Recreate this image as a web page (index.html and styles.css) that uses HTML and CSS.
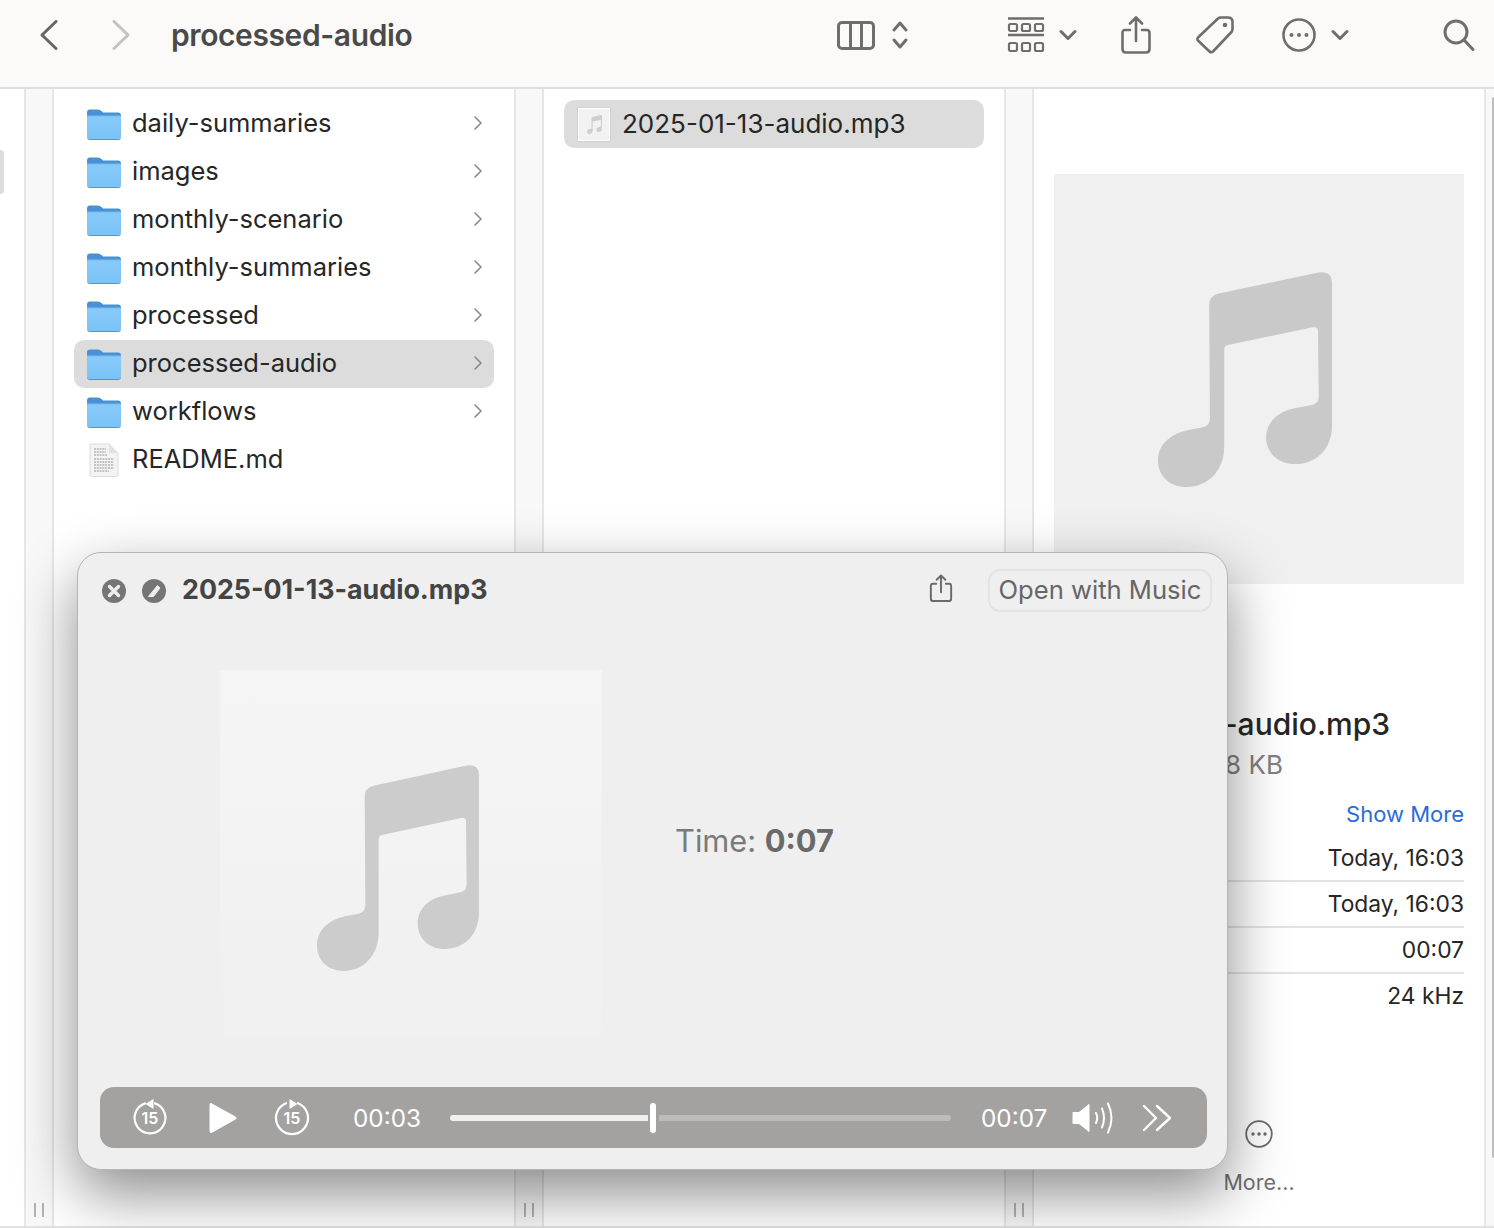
FILE: index.html
```html
<!DOCTYPE html>
<html lang="en">
<head>
<meta charset="utf-8">
<title>processed-audio</title>
<link rel="stylesheet" href="styles.css">
</head>
<body>
<svg class="sprite" width="0" height="0" aria-hidden="true">
  <defs>
    <linearGradient id="folderBody" x1="0" y1="0" x2="0" y2="1"><stop offset="0" stop-color="#86cbfa"/><stop offset="1" stop-color="#7cc2f5"/></linearGradient>
    <symbol id="folder" viewBox="0 0 34 31">
      <path d="M0 3.5Q0 .5 3 .5H11Q13 .5 14.5 2L16 3.500H31Q34 3.500 34 6.500V10H0Z" fill="#4a90d6"/>
      <path d="M0 6.500H34V27Q34 30 31 30H3Q0 30 0 27Z" fill="url(#folderBody)"/>
      <path d="M0 6.200H34V7.200H0Z" fill="#5fa6e4"/>
      <path d="M0 27Q0 30 3 30H31Q34 30 34 27V28Q34 31 31 31H3Q0 31 0 28Z" fill="#5a90c4"/>
    </symbol>
    <symbol id="note" viewBox="320 314 486 618" preserveAspectRatio="none">
      <path d="M463 410Q463 382 490 376L765 316Q806 308 806 345V755C806 825 760 866 703 866C655 866 622 833 622 790C622 745 655 715 705 705L750 696Q769 692 769 672L767 485Q767 470 752 473L515 524Q505 526 505 537V815C505 890 455 932 400 932C352 932 320 900 320 855C320 805 360 778 405 768L445 760Q465 756 465 735Z"/>
    </symbol>
    <symbol id="chev" viewBox="0 0 10 16"><path d="M2 2L8 8L2 14" fill="none" stroke="#8a8a8a" stroke-width="1.600" stroke-linecap="round" stroke-linejoin="round"/></symbol>
    <symbol id="down" viewBox="0 0 18 12"><path d="M2 2.500L9 9.500L16 2.500" fill="none" stroke="#6e6e6e" stroke-width="3" stroke-linecap="round" stroke-linejoin="round"/></symbol>
    <symbol id="grip" viewBox="0 0 12 16"><path d="M2 1V15M10 1V15" stroke="#9c9c9c" stroke-width="1.500"/></symbol>
  </defs>
</svg>

<div class="window">
  <header class="toolbar">
    <svg class="tb-back" width="18" height="30" viewBox="0 0 18 30"><path d="M16 1.500L2 15L16 28.500" fill="none" stroke="#666" stroke-width="3" stroke-linecap="round" stroke-linejoin="round"/></svg>
    <svg class="tb-forward" width="18" height="30" viewBox="0 0 18 30"><path d="M2 1.500L16 15L2 28.500" fill="none" stroke="#c2c2c2" stroke-width="3" stroke-linecap="round" stroke-linejoin="round"/></svg>
    <h1 class="tb-title">processed-audio</h1>
    <svg class="tb-columns" width="38" height="29" viewBox="0 0 38 29"><g fill="none" stroke="#6e6e6e" stroke-width="3"><rect x="1.500" y="1.500" width="35" height="26" rx="3.500"/><path d="M13.500 2V27M24.500 2V27"/></g></svg>
    <svg class="tb-updown" width="18" height="30" viewBox="0 0 18 30"><path d="M3 10L9 3L15 10M3 20L9 27L15 20" fill="none" stroke="#6e6e6e" stroke-width="3" stroke-linecap="round" stroke-linejoin="round"/></svg>
    <svg class="tb-group" width="38" height="36" viewBox="0 0 38 36"><g fill="none" stroke="#6e6e6e"><path d="M1 1.500H37M1 18H37" stroke-width="2.600"/><g stroke-width="2.200"><rect x="2" y="7" width="8" height="7" rx="1.500"/><rect x="15" y="7" width="8" height="7" rx="1.500"/><rect x="28" y="7" width="8" height="7" rx="1.500"/><rect x="2" y="26" width="8" height="8" rx="1.500"/><rect x="15" y="26" width="8" height="8" rx="1.500"/><rect x="28" y="26" width="8" height="8" rx="1.500"/></g></g></svg>
    <svg class="tb-down1" width="18" height="12"><use href="#down"/></svg>
    <svg class="tb-share" width="30" height="38" viewBox="0 0 30 38"><g fill="none" stroke="#6e6e6e" stroke-width="2.600" stroke-linecap="round" stroke-linejoin="round"><path d="M9 14H4Q1.500 14 1.500 17V33Q1.500 36.500 5 36.500H25Q28.500 36.500 28.500 33V17Q28.500 14 26 14H21"/><path d="M15 25V2M9 7.500L15 1.500L21 7.500"/></g></svg>
    <svg class="tb-tag" width="38" height="38" viewBox="0 0 38 38"><path d="M22 2.500Q23 1.500 25 1.500H32Q36.500 1.500 36.500 6V13Q36.500 15 35.500 16L17 35.500Q15 37 13.500 35.500L2 24.500Q.8 23 2 21.500Z" fill="none" stroke="#6e6e6e" stroke-width="2.600" stroke-linejoin="round"/><circle cx="29" cy="9" r="2.300" fill="#6e6e6e"/></svg>
    <svg class="tb-more" width="34" height="34" viewBox="0 0 34 34"><circle cx="17" cy="17" r="15.500" fill="none" stroke="#6e6e6e" stroke-width="2.600"/><g fill="#6e6e6e"><circle cx="9.500" cy="17" r="2"/><circle cx="17" cy="17" r="2"/><circle cx="24.500" cy="17" r="2"/></g></svg>
    <svg class="tb-down2" width="18" height="12"><use href="#down"/></svg>
    <svg class="tb-search" width="32" height="32" viewBox="0 0 32 32"><g fill="none" stroke="#6e6e6e" stroke-width="3" stroke-linecap="round"><circle cx="13" cy="13" r="11"/><path d="M21 21L30 30.500"/></g></svg>
  </header>

  <main class="browser">
    <div class="column col-stub"><div class="stub-selected"></div></div>
    <div class="strip"><svg class="grip" width="12" height="16"><use href="#grip"/></svg></div>

    <section class="column col-list">
      <div class="row"><svg class="icon-folder" width="34" height="31"><use href="#folder"/></svg><span class="row-name">daily-summaries</span><svg class="row-chev" width="10" height="16"><use href="#chev"/></svg></div>
      <div class="row"><svg class="icon-folder" width="34" height="31"><use href="#folder"/></svg><span class="row-name">images</span><svg class="row-chev" width="10" height="16"><use href="#chev"/></svg></div>
      <div class="row"><svg class="icon-folder" width="34" height="31"><use href="#folder"/></svg><span class="row-name">monthly-scenario</span><svg class="row-chev" width="10" height="16"><use href="#chev"/></svg></div>
      <div class="row"><svg class="icon-folder" width="34" height="31"><use href="#folder"/></svg><span class="row-name">monthly-summaries</span><svg class="row-chev" width="10" height="16"><use href="#chev"/></svg></div>
      <div class="row"><svg class="icon-folder" width="34" height="31"><use href="#folder"/></svg><span class="row-name">processed</span><svg class="row-chev" width="10" height="16"><use href="#chev"/></svg></div>
      <div class="row is-selected"><svg class="icon-folder" width="34" height="31"><use href="#folder"/></svg><span class="row-name">processed-audio</span><svg class="row-chev" width="10" height="16"><use href="#chev"/></svg></div>
      <div class="row"><svg class="icon-folder" width="34" height="31"><use href="#folder"/></svg><span class="row-name">workflows</span><svg class="row-chev" width="10" height="16"><use href="#chev"/></svg></div>
      <div class="row">
        <svg class="icon-folder" width="34" height="36" viewBox="0 0 34 36">
          <path d="M3 2H22L31 11V33Q31 34.500 29.500 34.500H4.500Q3 34.500 3 33Z" fill="#f3f3f3" stroke="#dcdcdc"/>
          <path d="M22 2V11H31Z" fill="#e2e2e2"/>
          <path d="M7 7H19M7 10H19M7 13H20M7 17H27M7 20H27M7 23H27M7 26H27M7 29H22" stroke="#b4b4b4" stroke-width="1.500" stroke-dasharray="2 .8"/>
        </svg>
        <span class="row-name">README.md</span>
      </div>
    </section>
    <div class="strip"><svg class="grip" width="12" height="16"><use href="#grip"/></svg></div>

    <section class="column col-list">
      <div class="row is-selected row-file">
        <div class="thumb"><svg class="thumb-note" width="15" height="19"><use href="#note"/></svg></div>
        <span class="row-name">2025-01-13-audio.mp3</span>
      </div>
    </section>
    <div class="strip"><svg class="grip" width="12" height="16"><use href="#grip"/></svg></div>

    <aside class="column col-preview">
      <div class="preview-art"><svg class="preview-note" width="174" height="215"><use href="#note"/></svg></div>
      <h2 class="preview-name">2025-01-13-audio.mp3</h2>
      <p class="preview-size">8 KB</p>
      <a class="show-more">Show More</a>
      <dl class="meta">
        <dd class="meta-row">Today, 16:03</dd>
        <dd class="meta-row">Today, 16:03</dd>
        <dd class="meta-row">00:07</dd>
        <dd class="meta-row">24 kHz</dd>
      </dl>
      <div class="more-action">
        <svg width="28" height="28" viewBox="0 0 28 28"><circle cx="14" cy="14" r="12.800" fill="none" stroke="#6a6a6a" stroke-width="1.800"/><g fill="#6a6a6a"><circle cx="8" cy="14" r="1.700"/><circle cx="14" cy="14" r="1.700"/><circle cx="20" cy="14" r="1.700"/></g></svg>
        <span>More...</span>
      </div>
    </aside>
    <div class="edge"><div class="edge-thumb"></div></div>
  </main>
</div>

<div class="quicklook">
  <div class="ql-head">
    <svg width="24" height="24" viewBox="0 0 24 24"><circle cx="12" cy="12" r="12" fill="#757575"/><path d="M7.500 7.500L16.500 16.500M16.500 7.500L7.500 16.500" stroke="#eee" stroke-width="3.400" stroke-linecap="round"/></svg>
    <svg class="ql-pin" width="24" height="24" viewBox="0 0 24 24"><circle cx="12" cy="12" r="12" fill="#757575"/><path d="M6.500 17.500H11.500L18 9L15.500 6.500Z" fill="#eee" stroke="#eee" stroke-width="1" stroke-linejoin="round"/></svg>
    <h3 class="ql-title">2025-01-13-audio.mp3</h3>
    <svg class="ql-share" width="24" height="29" viewBox="0 0 24 30"><g fill="none" stroke="#6a6a6a" stroke-width="2" stroke-linecap="round" stroke-linejoin="round"><path d="M7 10H3.500Q1.500 10 1.500 12.500V25.500Q1.500 28 4 28H20Q22.500 28 22.500 25.500V12.500Q22.500 10 20.500 10H17"/><path d="M12 19V2M7.500 6L12 1.500L16.500 6"/></g></svg>
    <button class="ql-open">Open with Music</button>
  </div>
  <div class="ql-body">
    <div class="ql-art"><svg class="ql-note" width="162" height="206"><use href="#note"/></svg></div>
    <p class="ql-time">Time: <b>0:07</b></p>
  </div>
  <div class="ql-controls">
    <svg class="ctl-back" width="34" height="38" viewBox="0 0 34 38"><path d="M12 4.400A15.400 15.400 0 1 0 22 4.400" fill="none" stroke="#fff" stroke-width="2.200" stroke-linecap="round"/><path d="M20.500 0V10L12.500 5Z" fill="#fff"/><text class="ctl-15" x="17" y="24.800">15</text></svg>
    <svg class="ctl-play" width="28" height="32" viewBox="0 0 28 32"><path d="M2 1.500Q1 1 1 3V29Q1 31 2.500 30.500L26.500 17Q28 16 26.500 15Z" fill="#fff" stroke="#fff" stroke-linejoin="round"/></svg>
    <svg class="ctl-fwd" width="36" height="38" viewBox="0 0 36 38"><path d="M24 4.200A16 16 0 1 1 12 4.200" fill="none" stroke="#fff" stroke-width="2.200" stroke-linecap="round"/><path d="M15.500 0V10L23.500 5Z" fill="#fff"/><text class="ctl-15" x="18" y="24.800">15</text></svg>
    <span class="ctl-time ctl-elapsed">00:03</span>
    <div class="slider">
      <div class="slider-fill"></div>
      <div class="slider-thumb"></div>
      <div class="slider-rest"></div>
    </div>
    <span class="ctl-time ctl-total">00:07</span>
    <svg class="ctl-vol" width="42" height="32" viewBox="0 0 42 32"><path d="M1 10.500H7L17 2.500V29.500L7 21.500H1Z" fill="#fff" stroke="#fff" stroke-linejoin="round"/><g fill="none" stroke="#fff" stroke-width="2" stroke-linecap="round"><path d="M24 11Q26.500 16 24 21"/><path d="M30 6.500Q34 16 30 25.500"/><path d="M36 1.500Q43 16 36 30.500"/></g></svg>
    <svg class="ctl-ff" width="30" height="28" viewBox="0 0 30 28"><path d="M2 2L14 14L2 26M15 2L28 14L15 26" fill="none" stroke="#fff" stroke-width="2.400" stroke-linecap="round" stroke-linejoin="round"/></svg>
  </div>
</div>
</body>
</html>
```
FILE: styles.css
```css
* { box-sizing: border-box; }
html, body { margin: 0; padding: 0; height: 100%; }
body {
  position: relative;
  width: 1494px;
  height: 1228px;
  overflow: hidden;
  background: #fff;
  font-family: Inter, "Liberation Sans", sans-serif;
  color: #262626;
}
.sprite { position: absolute; }
svg { display: block; flex: none; }

.window { display: flex; flex-direction: column; height: 100%; border-bottom: 2px solid #e2e2e2; }

.toolbar {
  display: flex;
  align-items: center;
  height: 89px;
  flex: none;
  padding: 0 0 17px 0;
  background: #fbfaf9;
  border-bottom: 2px solid #dedede;
}
.tb-back { margin-left: 40px; }
.tb-forward { margin-left: 54px; }
.tb-title { margin: 0 0 0 41px; font-size: 30px; font-weight: 600; color: #4a4a4a; letter-spacing: -0.4px; }
.tb-columns { margin-left: auto; }
.tb-updown { margin-left: 16px; }
.tb-group { margin-left: 98px; }
.tb-down1 { margin-left: 14px; }
.tb-share { margin-left: 44px; }
.tb-tag { margin-left: 45px; }
.tb-more { margin-left: 48px; }
.tb-down2 { margin-left: 15px; }
.tb-search { margin-left: 94px; margin-right: 19px; }

.browser { display: flex; flex: 1; min-height: 0; }
.column { height: 100%; }
.col-stub { width: 24px; padding-top: 61px; }
.stub-selected { width: 4px; height: 44px; background: #dcdcdc; border-radius: 0 8px 8px 0; }
.strip {
  display: flex;
  align-items: flex-end;
  justify-content: center;
  width: 30px;
  padding-bottom: 8px;
  background: #f8f8f8;
  border-left: 2px solid #e6e6e6;
  border-right: 2px solid #e6e6e6;
}
.col-list { width: 460px; padding: 11px 20px 0; }

.row { display: flex; align-items: center; height: 48px; padding-left: 13px; padding-right: 11px; border-radius: 10px; }
.row.is-selected { background: #dcdcdc; }
.row-name { margin-left: 11px; padding-bottom: 3px; font-size: 25.5px; color: #262626; }
.row-chev { margin-left: auto; margin-bottom: 2px; }

.row-file { padding-left: 14px; }
.row-file .row-name { margin-left: 12px; padding-bottom: 1px; font-size: 26px; }
.thumb { display: flex; align-items: center; justify-content: center; width: 32px; height: 33px; background: #f2f2f2; border: 1px solid #fff; box-shadow: 0 0 1px #999; }
.thumb-note { fill: #cfcfcf; }

.col-preview { display: flex; flex-direction: column; width: 450px; padding: 85px 20px 0; }
.preview-art { display: flex; align-items: center; justify-content: center; height: 410px; flex: none; background: #f0f0f0; }
.preview-note { fill: #c9c9c9; margin-left: -28px; }
.preview-name { margin: 122px 0 0; font-size: 30px; font-weight: 500; line-height: 36px; color: #262626; text-align: right; padding-right: 74px; white-space: nowrap; }
.preview-size { margin: 6px 0 0; font-size: 26px; line-height: 34px; color: #808080; text-align: right; padding-right: 181px; }
.show-more { display: block; margin-top: 17px; font-size: 22px; line-height: 30px; color: #2a6bdc; text-align: right; }
.meta { margin: 7px 0 0; }
.meta-row { margin: 0; height: 46px; line-height: 44px; font-size: 22.800px; color: #262626; text-align: right; border-bottom: 2px solid #e4e4e4; }
.meta-row:last-child { border-bottom: 0; }
.more-action { display: flex; flex-direction: column; align-items: center; margin-top: 100px; font-size: 21.500px; color: #707070; gap: 21px; }
.edge { display: flex; justify-content: flex-end; flex: 1; padding: 8px 0 68px; border-left: 2px solid #e6e6e6; background: #f8f8f8; }
.edge-thumb { width: 2px; background: #bdbdbd; border-radius: 2px 0 0 2px; }

.quicklook {
  position: absolute;
  left: 77px;
  top: 552px;
  width: 1151px;
  height: 618px;
  display: flex;
  flex-direction: column;
  padding: 16px 15px 21px 24px;
  background: #efefef;
  border: 1px solid #b5b5b5;
  border-radius: 24px;
  box-shadow: 0 24px 60px rgba(0, 0, 0, 0.45);
}
.ql-head { display: flex; align-items: center; height: 43px; flex: none; }
.ql-pin { margin-left: 16px; }
.ql-title { margin: 0 0 0 16px; padding-bottom: 4px; font-size: 26.800px; font-weight: 700; color: #444; }
.ql-share { margin-left: auto; margin-bottom: 5px; }
.ql-open {
  margin-left: 35px;
  width: 224px;
  height: 43px;
  padding: 0 0 2px;
  font: 400 25.600px Inter, "Liberation Sans", sans-serif;
  color: #666;
  background: transparent;
  border: 2px solid #e3e3e3;
  border-radius: 12px;
}
.ql-body { display: flex; align-items: center; flex: 1; padding: 6px 0 0 118px; }
.ql-art {
  display: flex;
  align-items: center;
  justify-content: center;
  width: 382px;
  height: 365px;
  background: linear-gradient(#f5f5f5, #f0f0f0);
}
.ql-note { fill: #cccccc; margin-left: -26px; margin-top: 30px; }
.ql-time { margin: 0 0 24px 73px; font-size: 30.800px; color: #7a7a7a; }
.ql-time b { color: #6a6a6a; font-weight: 700; }

.ql-controls {
  display: flex;
  align-items: center;
  height: 61px;
  flex: none;
  margin: 0 5px 0 -2px;
  padding: 0 36px 0 33px;
  background: #a3a2a0;
  border-radius: 14px;
  color: #fff;
}
.ctl-15 { font: 600 16px Inter, sans-serif; fill: #fff; text-anchor: middle; }
.ctl-play { margin-left: 42px; }
.ctl-fwd { margin-left: 37px; }
.ctl-time { flex: none; width: 67px; font-size: 24.300px; color: #fff; white-space: nowrap; }
.ctl-elapsed { margin-left: 43px; }
.slider { position: relative; display: flex; align-items: center; flex: none; width: 501px; height: 32px; margin-left: 30px; }
.slider-fill { width: 198px; height: 6px; background: #f0f0f0; border-radius: 3px 0 0 3px; }
.slider-thumb { width: 6px; height: 30px; margin: 0 3px 0 2px; background: #fff; border-radius: 3px; }
.slider-rest { flex: 1; height: 6px; background: #bdbcbb; border-radius: 0 3px 3px 0; }
.ctl-total { margin-left: 30px; }
.ctl-vol { margin-left: 24px; }
.ctl-ff { margin-left: 28px; }
```
